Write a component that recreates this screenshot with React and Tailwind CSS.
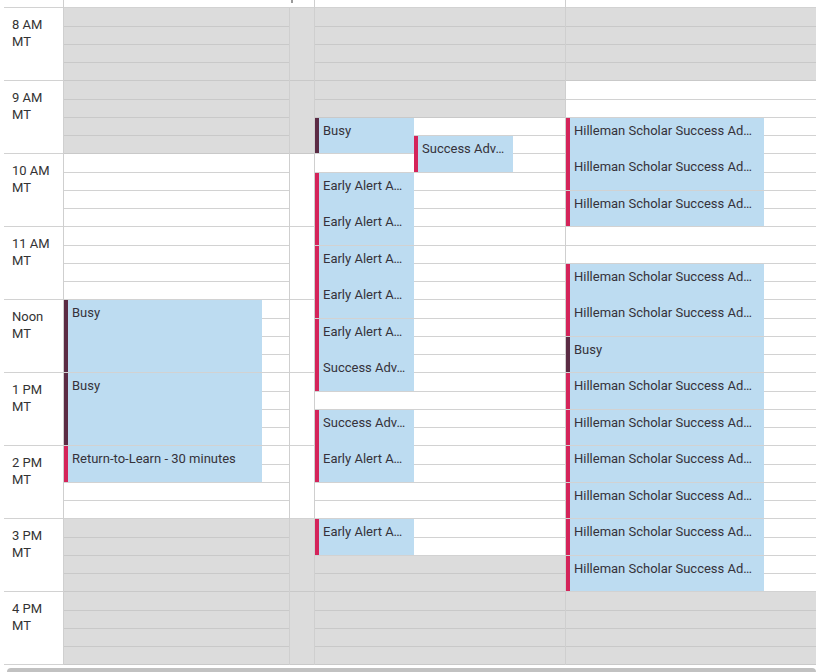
import React from 'react';

const HOURS = ['8 AM', '9 AM', '10 AM', '11 AM', 'Noon', '1 PM', '2 PM', '3 PM', '4 PM'];
const OFF = [-1, 18, 36, 54];
const P = (s) => 73 * Math.floor(s / 4) + OFF[s % 4];

const EA = 'Early Alert A…';
const SA = 'Success Adv…';
const HS = 'Hilleman Scholar Success Ad…';

const EVENTS = {
  1: [
    { s: 16, e: 20, lane: 0, w: 198, dark: true, items: ['Busy'] },
    { s: 20, e: 24, lane: 0, w: 198, dark: true, items: ['Busy'] },
    { s: 24, e: 26, lane: 0, w: 198, items: ['Return-to-Learn - 30 minutes'] },
  ],
  2: [
    { s: 6, e: 8, lane: 0, w: 99, dark: true, items: ['Busy'] },
    { s: 7, e: 9, lane: 99, w: 99, items: [SA] },
    { s: 9, e: 13, lane: 0, w: 99, items: [EA, EA] },
    { s: 13, e: 17, lane: 0, w: 99, items: [EA, EA] },
    { s: 17, e: 21, lane: 0, w: 99, items: [EA, SA] },
    { s: 22, e: 26, lane: 0, w: 99, items: [SA, EA] },
    { s: 28, e: 30, lane: 0, w: 99, items: [EA] },
  ],
  3: [
    { s: 6, e: 10, lane: 0, w: 198, items: [HS, HS] },
    { s: 10, e: 12, lane: 0, w: 198, items: [HS] },
    { s: 14, e: 18, lane: 0, w: 198, items: [HS, HS] },
    { s: 18, e: 20, lane: 0, w: 198, dark: true, items: ['Busy'] },
    { s: 20, e: 22, lane: 0, w: 198, items: [HS] },
    { s: 22, e: 24, lane: 0, w: 198, items: [HS] },
    { s: 24, e: 26, lane: 0, w: 198, items: [HS] },
    { s: 26, e: 28, lane: 0, w: 198, items: [HS] },
    { s: 28, e: 30, lane: 0, w: 198, items: [HS] },
    { s: 30, e: 32, lane: 0, w: 198, items: [HS] },
  ],
};

const OPEN = { 1: [8, 28], 2: [6, 30], 3: [4, 32] };

function Quarters({ col }) {
  const [a, b] = OPEN[col];
  const cells = [];
  for (let s = 0; s < 36; s++) {
    const open = s >= a && s < b;
    const first = s % 4 === 0;
    cells.push(
      <div
        key={s}
        className={
          (first ? 'h-[19px] ' : 'h-[18px] ') +
          (open ? 'bg-white border-b border-[#d2d2d2]' : 'bg-[#dcdcdc] border-b border-[#c9c9c9]')
        }
      />
    );
  }
  return <div className="flex flex-col">{cells}</div>;
}

function Events({ col }) {
  return EVENTS[col].map((ev, i) => {
    const top = P(ev.s) + 1;
    const height = P(ev.e) - P(ev.s) - 1;
    return (
      <div
        key={i}
        className={
          'absolute flex flex-col overflow-hidden bg-[#bddcf1] border-l-4 ' +
          (ev.dark ? 'border-[#5b2b44]' : 'border-[#d4245a]')
        }
        style={{ top, height, left: ev.lane, width: ev.w }}
      >
        {ev.items.map((t, j) => (
          <div
            key={j}
            className="h-[36px] shrink-0 pt-[4px] pl-[4px] pr-[2px] text-[13px] leading-[18px] text-[#35323a] whitespace-nowrap overflow-hidden"
          >
            {t}
          </div>
        ))}
      </div>
    );
  });
}

export default function App() {
  return (
    <div className="w-[816px] h-[672px] overflow-hidden bg-white flex flex-col font-['Roboto',sans-serif]">
      <div className="flex h-[665px] shrink-0">
        <div className="pl-[4px] shrink-0">
          <div className="w-[60px] h-full border-r border-[#cfcfcf] flex flex-col">
            <div className="h-[8px] border-b border-[#d2d2d2] shrink-0" />
            {HOURS.map((h) => (
              <div
                key={h}
                className="h-[73px] shrink-0 border-b border-[#d2d2d2] pt-[8px] pl-[8px] text-[13px] leading-[17px] text-[#333]"
              >
                <div>{h}</div>
                <div>MT</div>
              </div>
            ))}
          </div>
        </div>

        <div className="w-[251px] shrink-0 border-r border-[#cfcfcf] flex flex-col">
          <div className="h-[8px] shrink-0 border-b border-[#d2d2d2] relative">
            <span className="absolute left-[227px] top-0 w-[2px] h-[3px] bg-[#9a9a9a]" />
          </div>
          <div className="flex relative">
            <div className="w-[226px] shrink-0 border-r border-[#cfcfcf]">
              <Quarters col={1} />
            </div>
            <div className="flex-1 flex flex-col">
              {HOURS.map((h, i) => (
                <div
                  key={h}
                  className={
                    'h-[73px] shrink-0 border-b ' +
                    (i < 2 || i > 6 ? 'bg-[#dcdcdc] border-[#c9c9c9]' : 'bg-white border-[#d2d2d2]')
                  }
                />
              ))}
            </div>
            <Events col={1} />
          </div>
        </div>

        <div className="w-[251px] shrink-0 border-r border-[#cfcfcf] flex flex-col">
          <div className="h-[8px] shrink-0 border-b border-[#d2d2d2]" />
          <div className="relative">
            <Quarters col={2} />
            <Events col={2} />
          </div>
        </div>

        <div className="w-[251px] shrink-0 border-r border-[#cfcfcf] flex flex-col">
          <div className="h-[8px] shrink-0 border-b border-[#d2d2d2]" />
          <div className="relative">
            <Quarters col={3} />
            <Events col={3} />
          </div>
        </div>
      </div>
      <div className="h-[7px] shrink-0 pl-[7px] pt-[3px] overflow-hidden">
        <div className="h-[8px] bg-[#c1c1c1] rounded-[4px]" />
      </div>
    </div>
  );
}
